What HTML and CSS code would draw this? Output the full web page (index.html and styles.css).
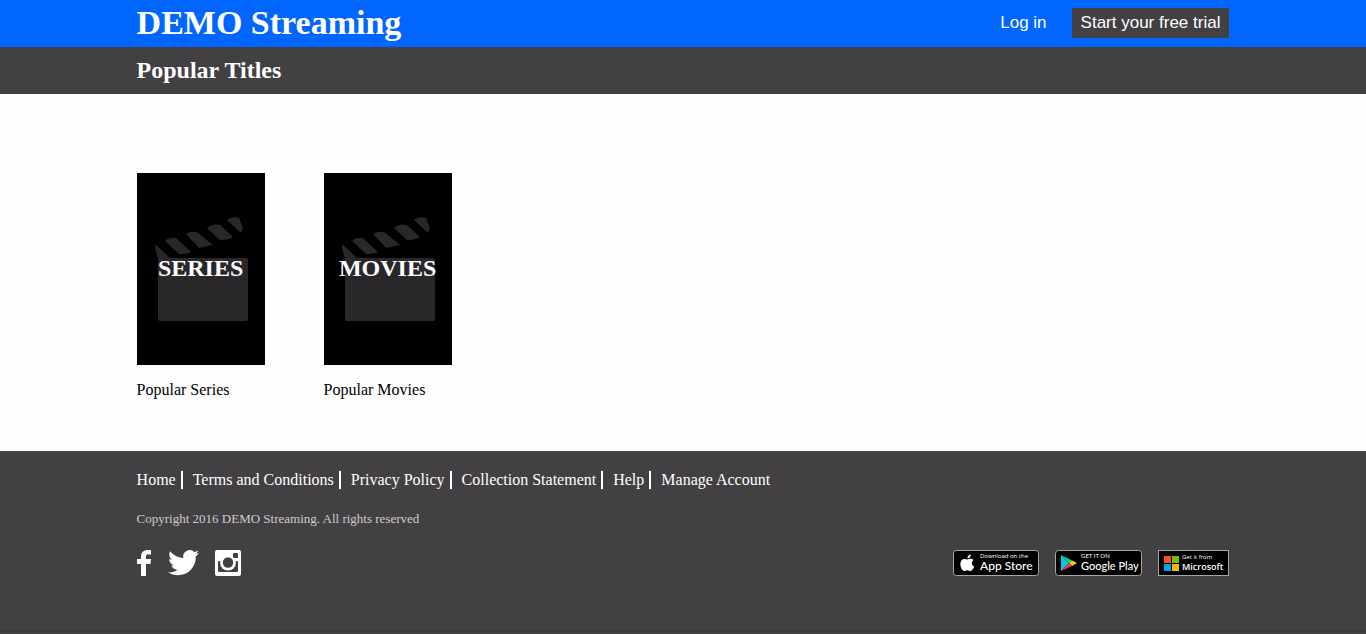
FILE: index.html
```
<!DOCTYPE html>
<html lang="en">
<head>
<meta charset="utf-8">
<meta name="viewport" content="width=device-width, initial-scale=1">
<title>DEMO Streaming</title>
<link rel="stylesheet" href="styles.css">
</head>
<body>
<svg class="defs" aria-hidden="true">
  <symbol id="clapper" viewBox="0 0 128 192">
    <g fill="#29272a">
      <path d="M18 71L33 85H109Q111 85 111 87V146Q111 148 109 148H23Q21 148 21 146V85Q18 78 18 71Z"/>
      <path d="M28 68Q32 64 39 65L54 79Q50 81 42 81Z"/>
      <path d="M49 61Q53 58 60 59L76 72Q71 73 62 75Z"/>
      <path d="M70 55Q75 50 83 52L96 64Q92 67 83 67Z"/>
      <path d="M90 47Q95 43 102 45L106 55L104 60Z"/>
    </g>
  </symbol>
</svg>

<header class="topbar">
  <h1 class="brand">DEMO Streaming</h1>
  <nav class="account">
    <a class="login" href="#">Log in</a>
    <button class="trial" type="button">Start your free trial</button>
  </nav>
</header>

<div class="subbar"><h2 class="page-title">Popular Titles</h2></div>

<main class="titles">
  <a class="card" href="#">
    <span class="poster"><svg class="clapper" aria-hidden="true"><use href="#clapper"/></svg><span class="poster-name">SERIES</span></span>
    <span class="caption">Popular Series</span>
  </a>
  <a class="card" href="#">
    <span class="poster"><svg class="clapper" aria-hidden="true"><use href="#clapper"/></svg><span class="poster-name">MOVIES</span></span>
    <span class="caption">Popular Movies</span>
  </a>
</main>

<footer class="footer">
  <nav class="links">
    <a href="#">Home</a>
    <a href="#">Terms and Conditions</a>
    <a href="#">Privacy Policy</a>
    <a href="#">Collection Statement</a>
    <a href="#">Help</a>
    <a href="#">Manage Account</a>
  </nav>
  <p class="copyright">Copyright 2016 DEMO Streaming. All rights reserved</p>
  <div class="bottom">
    <div class="social">
      <a href="#" aria-label="Facebook"><svg width="15" height="26" viewBox="0 0 15 26"><path fill="#fff" d="M14 0H11C6.500 0 4 2.500 4 6.500V9H0V14H4V26H9V14H13.500L14 9H9V6.500C9 5 9.600 4.500 11 4.500H14Z"/></svg></a>
      <a href="#" aria-label="Twitter"><svg width="31" height="26" viewBox="0 0 31 26"><path fill="#fff" d="M31 3.100C29.900 3.600 28.600 3.900 27.400 4.100C28.700 3.300 29.700 2 30.200.5C29 1.200 27.600 1.800 26.200 2.100A6.360 6.360 0 0 0 15.400 7.900C10.100 7.600 5.400 5.100 2.200 1.200C.5 4.100 1.300 7.800 4.100 9.700C3.100 9.700 2.100 9.400 1.200 8.900C1.200 12 3.300 14.500 6.300 15.200C5.400 15.400 4.400 15.500 3.400 15.300C4.200 17.900 6.600 19.700 9.400 19.700C6.800 21.800 3.400 22.700 0 22.300C2.800 24.100 6.200 25.200 9.700 25.200C21.500 25.200 28.200 15.300 27.800 6.400C29.100 5.500 30.200 4.400 31 3.100Z"/></svg></a>
      <a href="#" aria-label="Instagram"><svg width="26" height="26" viewBox="0 0 26 26"><rect width="26" height="26" rx="2" fill="#fff"/><rect x="3" y="11" width="20" height="11" rx="1" fill="#434043"/><circle cx="13" cy="12.500" r="8" fill="#fff"/><circle cx="13" cy="12.500" r="5.200" fill="#434043"/><rect x="18" y="3" width="5" height="5" rx="1" fill="#434043"/></svg></a>
    </div>
    <div class="stores">
      <a href="#" aria-label="Download on the App Store"><svg width="86" height="26" viewBox="0 0 86 26"><rect x=".5" y=".5" width="85" height="25" rx="3" fill="#000" stroke="#a6a6a6"/><path fill="#fff" d="M17.800 4.500C18 6.500 16.200 8.400 14.400 8.300C14.200 6.400 15.900 4.700 17.800 4.500ZM20.600 10C18 11.600 18.200 15.300 21.200 16.600C20.500 18.500 19 20.900 17.400 21C16 21 15.700 20.200 14.200 20.200C12.700 20.200 12.300 21 11 21C8.500 21 5.700 13.500 8.600 10.300C10.700 8 12.900 9.500 14.200 9.500C15.500 9.500 18.200 7.600 20.600 10Z"/><text class="small" x="27" y="8">Download on the</text><text class="big apple" x="27" y="20">App Store</text></svg></a>
      <a href="#" aria-label="Get it on Google Play"><svg width="87" height="26" viewBox="0 0 87 26"><rect x=".5" y=".5" width="86" height="25" rx="3" fill="#000" stroke="#a6a6a6"/><path fill="#00c8e8" d="M6 5V21L14 13Z"/><path fill="#00e083" d="M6 5L17 10.500L14 13Z"/><path fill="#ffce00" d="M17 10.500L22 13L17 16L14 13Z"/><path fill="#f53b48" d="M6 21L14 13L17 16Z"/><text class="small narrow" x="26" y="8">GET IT ON</text><text class="big google" x="26" y="20">Google Play</text></svg></a>
      <a href="#" aria-label="Get it from Microsoft"><svg width="71" height="26" viewBox="0 0 71 26"><rect x=".5" y=".5" width="70" height="25" fill="#000" stroke="#a6a6a6"/><path fill="#f25022" d="M6 6H13V13H6Z"/><path fill="#7fba00" d="M14 6H21V13H14Z"/><path fill="#00a4ef" d="M6 14H13V21H6Z"/><path fill="#ffb900" d="M14 14H21V21H14Z"/><text class="small" x="24" y="9">Get it from</text><text class="big microsoft" x="24" y="20">Microsoft</text></svg></a>
    </div>
  </div>
</footer>
</body>
</html>
```
FILE: styles.css
```
* { box-sizing: border-box; }
html { min-height: 100%; background: #434043; }
body { margin: 0; font: 16px/18px "Liberation Serif", serif; color: #000; }
a { color: inherit; text-decoration: none; }
svg { display: block; }
.defs { display: none; }
.topbar, .subbar, .titles, .footer { padding-left: 10%; padding-right: 10%; }
.topbar { display: flex; flex-wrap: wrap; align-items: flex-start; justify-content: space-between; min-height: 47px; background: #0066ff; color: #fff; }
.brand { margin: 0; font-size: 34px; line-height: 45px; }
.account { display: flex; align-items: center; gap: 25px; padding-top: 8px; font: 17px/20px "Liberation Sans", sans-serif; }
.trial { padding: 5px 9px; border: 0; border-radius: 1px; background: #434043; color: #fff; font: inherit; }
.subbar { background: #434043; color: #fff; }
.page-title { margin: 0; font-size: 24px; line-height: 47px; }
.titles { display: flex; flex-wrap: wrap; gap: 59px; padding-top: 79px; padding-bottom: 52px; background: #fefefe; }
.card { display: flex; flex-direction: column; gap: 16px; width: 128px; }
.poster { display: grid; place-items: center; aspect-ratio: 2 / 3; background: #000; color: #fff; }
.poster > * { grid-area: 1 / 1; }
.clapper { width: 100%; height: 100%; }
.poster-name { padding-bottom: 2px; font-size: 24px; font-weight: bold; line-height: 28px; }
.footer { padding-top: 20px; padding-bottom: 54px; background: #434043; color: #fff; border-bottom: 2px solid #3a383a; }
.links { display: flex; flex-wrap: wrap; row-gap: 8px; }
.links a { padding-right: 5px; border-right: 2px solid #fff; margin-right: 10px; }
.links a:last-child { padding: 0; border: 0; margin: 0; }
.copyright { margin: 20px 0 21px; font-size: 13px; line-height: 20px; color: #ccc; }
.bottom { display: flex; flex-wrap: wrap; justify-content: space-between; gap: 16px; }
.social, .stores { display: flex; gap: 16px; }
.stores text { fill: #fff; font-family: Lato, sans-serif; }
.stores .small { font-size: 6px; font-family: "Open Sans", sans-serif; }
.stores .narrow { font-family: Lato, sans-serif; }
.stores .big { font-size: 11px; }
.stores .apple { font-size: 12px; font-weight: 500; }
.stores .google { font-weight: 500; }
.stores .microsoft { font-family: "Open Sans", sans-serif; font-size: 9px; font-weight: 600; }
```
